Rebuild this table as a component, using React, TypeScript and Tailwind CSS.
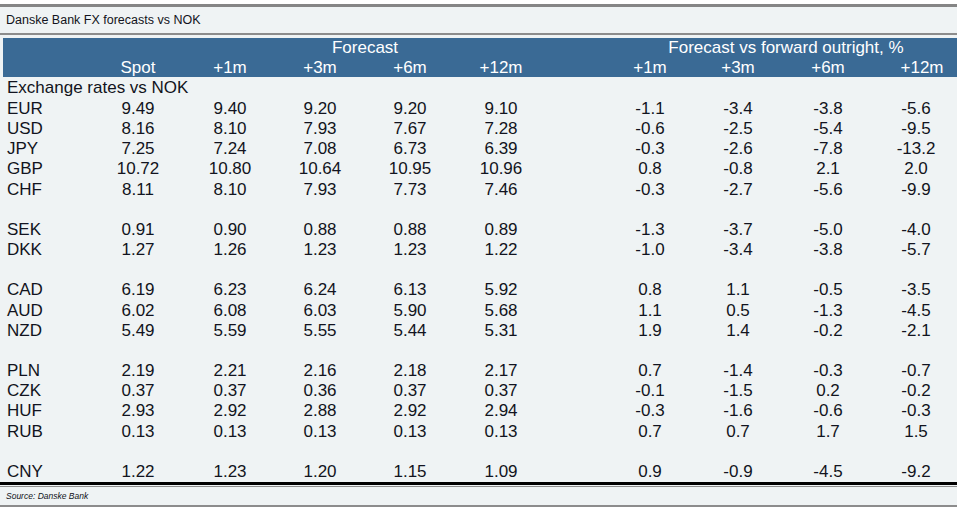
import React from "react";

type Row = { ccy: string; vals: string[]; pct: string[] } | null;

const rows: Row[] = [
  { ccy: "EUR", vals: ["9.49", "9.40", "9.20", "9.20", "9.10"], pct: ["-1.1", "-3.4", "-3.8", "-5.6"] },
  { ccy: "USD", vals: ["8.16", "8.10", "7.93", "7.67", "7.28"], pct: ["-0.6", "-2.5", "-5.4", "-9.5"] },
  { ccy: "JPY", vals: ["7.25", "7.24", "7.08", "6.73", "6.39"], pct: ["-0.3", "-2.6", "-7.8", "-13.2"] },
  { ccy: "GBP", vals: ["10.72", "10.80", "10.64", "10.95", "10.96"], pct: ["0.8", "-0.8", "2.1", "2.0"] },
  { ccy: "CHF", vals: ["8.11", "8.10", "7.93", "7.73", "7.46"], pct: ["-0.3", "-2.7", "-5.6", "-9.9"] },
  null,
  { ccy: "SEK", vals: ["0.91", "0.90", "0.88", "0.88", "0.89"], pct: ["-1.3", "-3.7", "-5.0", "-4.0"] },
  { ccy: "DKK", vals: ["1.27", "1.26", "1.23", "1.23", "1.22"], pct: ["-1.0", "-3.4", "-3.8", "-5.7"] },
  null,
  { ccy: "CAD", vals: ["6.19", "6.23", "6.24", "6.13", "5.92"], pct: ["0.8", "1.1", "-0.5", "-3.5"] },
  { ccy: "AUD", vals: ["6.02", "6.08", "6.03", "5.90", "5.68"], pct: ["1.1", "0.5", "-1.3", "-4.5"] },
  { ccy: "NZD", vals: ["5.49", "5.59", "5.55", "5.44", "5.31"], pct: ["1.9", "1.4", "-0.2", "-2.1"] },
  null,
  { ccy: "PLN", vals: ["2.19", "2.21", "2.16", "2.18", "2.17"], pct: ["0.7", "-1.4", "-0.3", "-0.7"] },
  { ccy: "CZK", vals: ["0.37", "0.37", "0.36", "0.37", "0.37"], pct: ["-0.1", "-1.5", "0.2", "-0.2"] },
  { ccy: "HUF", vals: ["2.93", "2.92", "2.88", "2.92", "2.94"], pct: ["-0.3", "-1.6", "-0.6", "-0.3"] },
  { ccy: "RUB", vals: ["0.13", "0.13", "0.13", "0.13", "0.13"], pct: ["0.7", "0.7", "1.7", "1.5"] },
  null,
  { ccy: "CNY", vals: ["1.22", "1.23", "1.20", "1.15", "1.09"], pct: ["0.9", "-0.9", "-4.5", "-9.2"] },
];

const cols = "grid grid-cols-[92px_92px_92px_88px_92px_90px_59px_90px_86px_94px_82px]";

const App = () => {
  return (
    <div className="w-[965px] h-[515px] bg-white pt-[4px] font-['Liberation_Sans',Arial,sans-serif] text-[#121420]">
      <div className="w-[957px] bg-[#eff3f4]">
        <div className="h-[3px] bg-[#858585]" />
        <div className="h-[26px] flex items-center pl-[6px] text-[12.5px]">
          Danske Bank FX forecasts vs NOK
        </div>
        <div className="h-[2px] bg-[#8c8c8c]" />
        <div className="h-[3px]" />

        {/* header */}
        <div className="ml-[3px] h-[39px] bg-[#3a6a95] text-white text-[17px] leading-[19.5px]">
          <div className="grid grid-cols-[89px_92px_362px_59px_352px]">
            <div />
            <div />
            <div className="text-center">Forecast</div>
            <div />
            <div className="text-center pl-[10px]">Forecast vs forward outright, %</div>
          </div>
          <div className="grid grid-cols-[89px_92px_92px_88px_92px_90px_59px_90px_86px_94px_82px] text-center">
            <div />
            <div>Spot</div>
            <div>+1m</div>
            <div>+3m</div>
            <div>+6m</div>
            <div>+12m</div>
            <div />
            <div>+1m</div>
            <div>+3m</div>
            <div>+6m</div>
            <div className="pl-[12px]">+12m</div>
          </div>
        </div>

        {/* body */}
        <div className="text-[17px]">
          <div className="h-[22px] leading-[22px] pl-[7px]">Exchange rates vs NOK</div>
          {rows.map((r, i) =>
            r ? (
              <div key={i} className={`${cols} h-[20.17px] leading-[20.17px] text-center`}>
                <div className="text-left pl-[7px]">{r.ccy}</div>
                {r.vals.map((v, j) => (
                  <div key={j}>{v}</div>
                ))}
                <div />
                {r.pct.map((v, j) => (
                  <div key={j}>{v}</div>
                ))}
              </div>
            ) : (
              <div key={i} className="h-[20.17px]" />
            )
          )}
        </div>

        <div className="h-[3px] bg-black mt-[0.3px]" />
        <div className="h-[1px]" />
        <div className="h-[1px] bg-[#8c8c8c]" />
        <div className="h-[18px] flex items-center pl-[6px] text-[8.5px] italic">
          Source: Danske Bank
        </div>
        <div className="h-[2px] bg-[#8c8c8c]" />
      </div>
    </div>
  );
};

export default App;
